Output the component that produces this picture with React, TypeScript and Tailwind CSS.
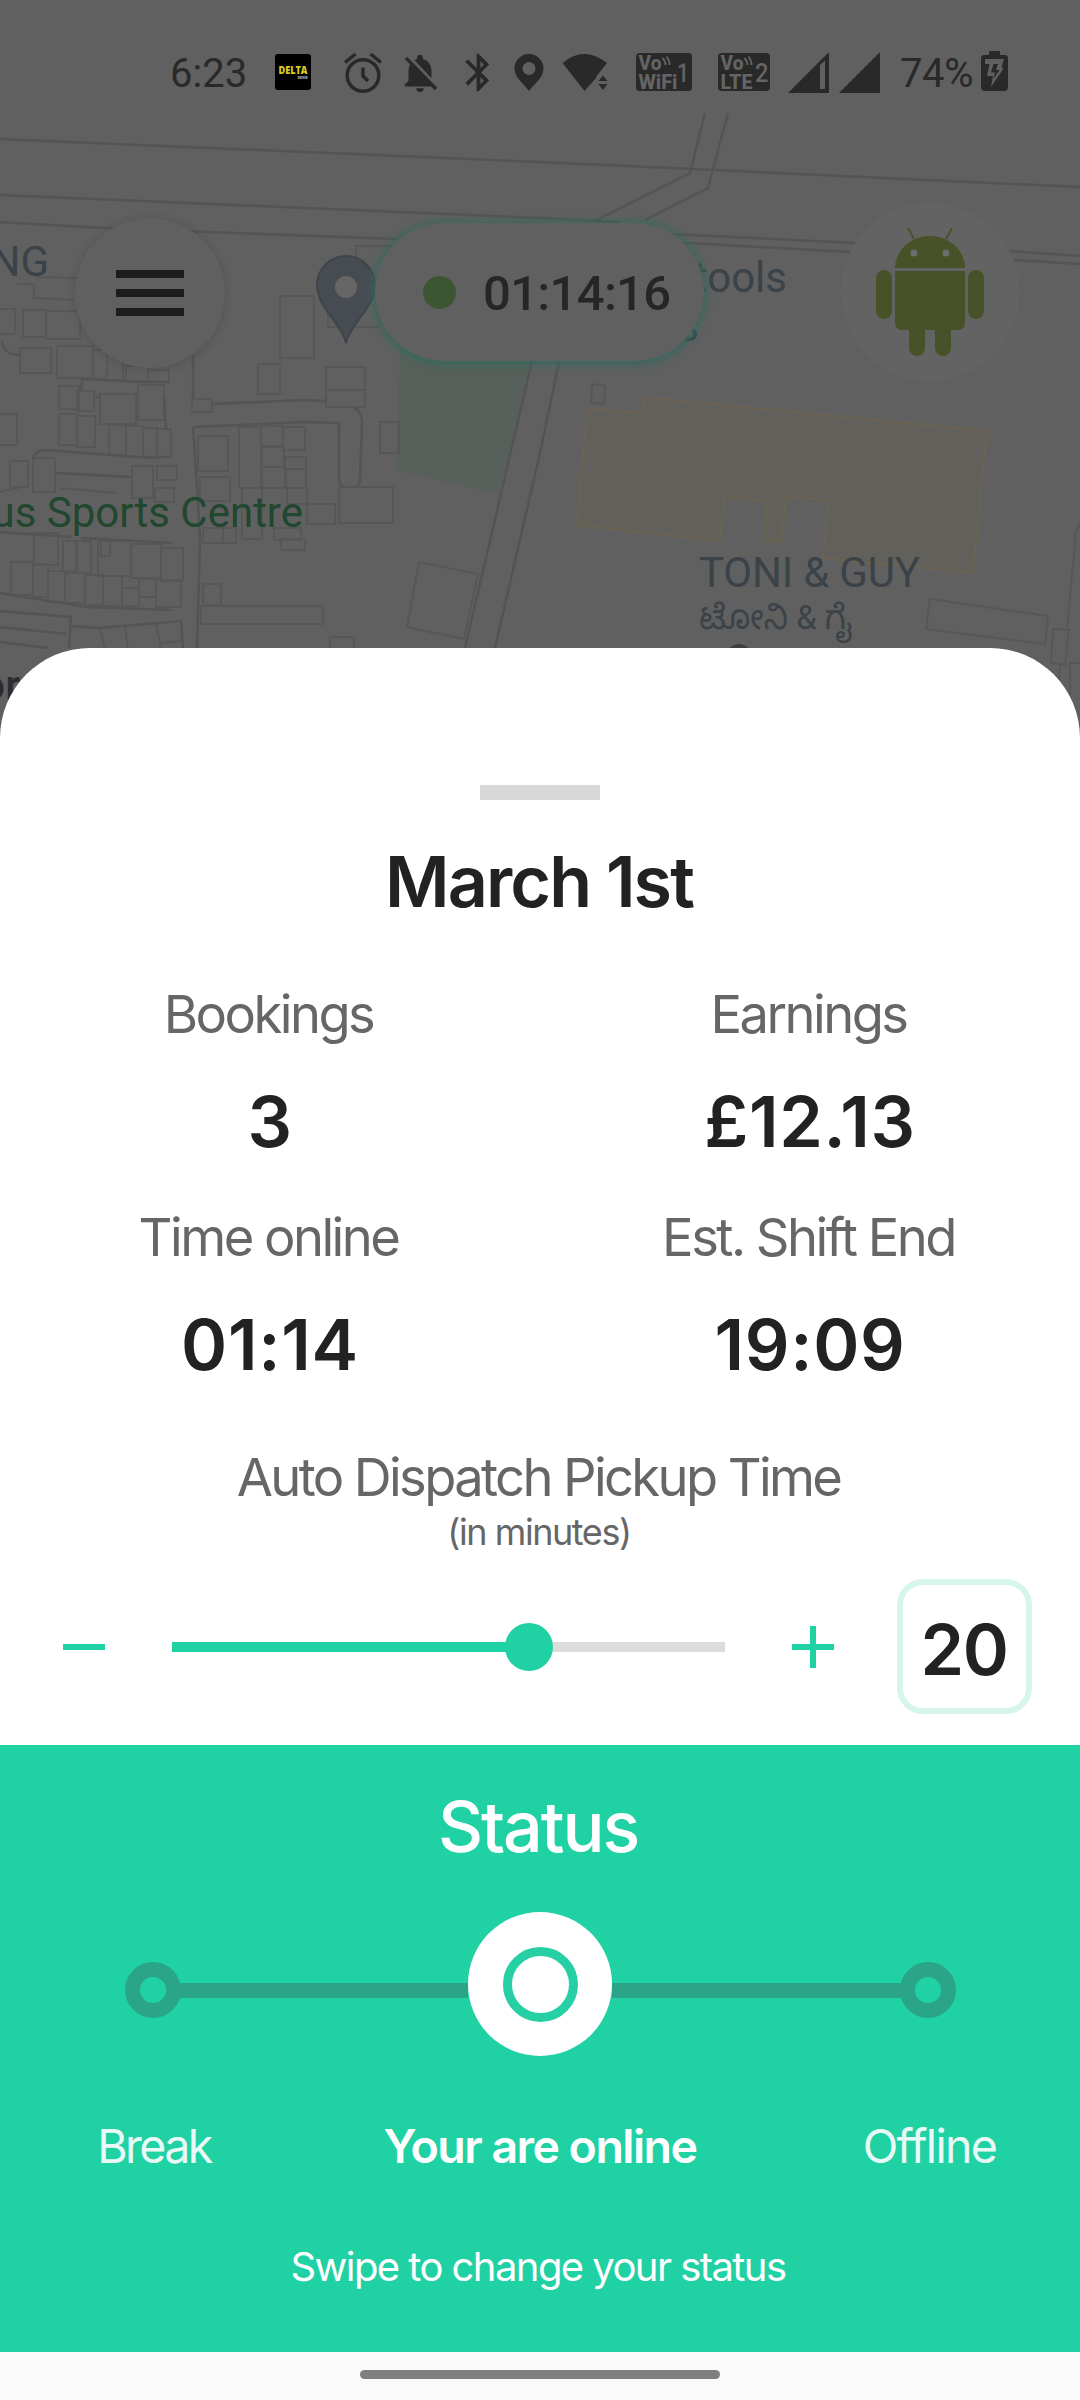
import React, { useState } from 'react';
import { MdBluetooth, MdNotificationsOff } from 'react-icons/md';
import { clsx } from 'clsx';

const MAX_MINUTES = 31;

const stats = [
  { label: 'Bookings', value: '3' },
  { label: 'Earnings', value: '£12.13' },
  { label: 'Time online', value: '01:14' },
  { label: 'Est. Shift End', value: '19:09' },
];

// x, y, width, height of the plain building outlines
const buildings = [
  [280, 296, 34, 62], [258, 364, 22, 30], [326, 367, 39, 23], [326, 390, 39, 17],
  [380, 422, 19, 31], [339, 487, 54, 36], [307, 504, 28, 20], [20, 348, 31, 25],
  [57, 346, 36, 32], [93, 350, 14, 29], [107, 355, 16, 25], [126, 366, 22, 15],
  [148, 370, 21, 12], [59, 386, 20, 23], [77, 391, 17, 20], [100, 394, 36, 30],
  [138, 385, 26, 35], [59, 414, 18, 31], [77, 416, 18, 31], [109, 425, 17, 30],
  [126, 426, 17, 31], [143, 428, 14, 30], [157, 429, 14, 28], [10, 461, 18, 26],
  [33, 458, 22, 34], [132, 466, 21, 32], [157, 466, 20, 14], [155, 488, 19, 14],
  [192, 399, 20, 13], [198, 436, 30, 35], [200, 477, 30, 24], [239, 427, 22, 61],
  [261, 426, 22, 20], [283, 427, 22, 23], [262, 447, 22, 20], [262, 467, 23, 21],
  [285, 457, 21, 12], [286, 469, 20, 19], [242, 488, 20, 51], [287, 488, 20, 16],
  [203, 528, 20, 15], [223, 528, 13, 15], [274, 528, 27, 12], [281, 539, 24, 11],
  [34, 533, 24, 32], [63, 541, 13, 30], [77, 541, 14, 32], [98, 541, 33, 35],
  [101, 541, 9, 15], [131, 544, 30, 34], [161, 548, 22, 33], [11, 562, 22, 33],
  [33, 564, 15, 33], [48, 571, 17, 31], [65, 573, 20, 30], [85, 575, 18, 30],
  [103, 576, 19, 30], [122, 588, 17, 18], [139, 579, 17, 18], [156, 580, 25, 27],
  [203, 584, 18, 21], [201, 606, 122, 18], [330, 637, 24, 20], [23, 310, 23, 27],
  [46, 311, 34, 28], [-5, 309, 20, 25], [-5, 414, 22, 31],
];

function CityMap() {
  return (
    <svg className="absolute inset-x-0 top-0" width="1080" height="740" viewBox="0 0 1080 740" fill="none">
      <path d="M400 340L536 345L499 494L396 471Z" fill="#57605a" />
      <path
        d="M587 408L643 413L644 397L987 431L973 573L823 558L828 500L786 497L782 542L765 541L767 501L724 497L720 541L577 525Z"
        fill="#62605b"
        stroke="#6a6352"
        strokeWidth="2"
      />
      <g stroke="#575757" strokeWidth="2">
        {buildings.map(([x, y, w, h]) => (
          <rect key={`${x}-${y}-${w}`} x={x} y={y} width={w} height={h} />
        ))}
        <path d="M17 284H34V298L74 300M36 277L82 278M400 246H356V262M328 310V327H380" />
        <path d="M419 562L478 574L464 639L407 627Z" />
        <path d="M592 384L605 386L604 404L591 403Z" />
        <path d="M930 599L1048 616L1045 644L926 629Z" />
        <path d="M1080 522L1076 532L1067 628M1053 629L1069 630L1065 665L1051 663ZM1060 665L1058 690M1080 663H1070V700" />
        <path d="M100 628L105 650M125 625L128 650M156 622L161 650M160 643L181 641M60 488L115 493M0 492L26 486" />
      </g>
      {/* roads */}
      <g stroke="#545454" strokeWidth="2.5">
        <path d="M0 139L540 162L1080 187" />
        <path d="M0 195L165 202L540 218L620 222M0 222L103 228L396 239M670 234L855 243M670 242L850 252M1010 251L1080 256M1014 260L1080 264" />
        <path d="M705 113L690 173L593 222M728 113L708 188L645 220" />
        <path d="M532 361L465 648M559 362L540 453L495 648" />
        <path d="M193 355V399M212 404L303 400L327 401M353 407Q362 411 362 424L360 480Q359 487 354 487M193 427L303 422L339 423V480Q340 487 344 487" />
        <path d="M193 427L198 500L200 540L197 648" />
        <path d="M2 340Q3 355 20 355M82 379L81 390M82 379L138 382H169M94 397H100M164 395L166 430M33 460Q34 450 45 450L138 457H169M55 473L131 477" />
        <path d="M0 532L71 537M81 538L172 543M0 593L86 607L172 610M0 611L71 617L69 648M0 627L67 634M0 642L48 648M71 626L100 628L181 621L183 648" />
      </g>
      <g fill="#3b4248" fontFamily="Roboto, sans-serif" fontSize="42">
        <text x="49" y="276" textAnchor="end">NG</text>
        <text x="787" y="292" textAnchor="end">tools</text>
        <text x="699" y="341" textAnchor="end">s</text>
        <text x="699" y="587" textLength="221">TONI &amp; GUY</text>
        <text x="699" y="629" fontSize="34" fontFamily="Roboto, 'Noto Sans', 'Noto Sans Kannada', sans-serif" textLength="153" lengthAdjust="spacingAndGlyphs">ಟೋನಿ &amp; ಗೈ</text>
        <text x="303" y="527" textAnchor="end" fill="#21472f">us Sports Centre</text>
        <text x="20" y="700" textAnchor="end" fill="#2d2d2f" fontWeight="500">or</text>
      </g>
      <circle cx="739" cy="657" r="13" fill="#3f3f3f" />
      <path d="M346 343C343 325 317 308 317 285A29 29 0 0 1 375 285C375 308 349 325 346 343Z" fill="#474c52" stroke="#3f454b" strokeWidth="2" />
      <circle cx="346" cy="287" r="11" fill="#666666" />
    </svg>
  );
}

type VoBadgeProps = { network: string; networkWidth: number; slot: string; slotX: number; slotWidth: number; width: number };

function VoBadge({ network, networkWidth, slot, slotX, slotWidth, width }: VoBadgeProps) {
  return (
    <svg width={width} height="38" viewBox={`0 0 ${width} 38`} fontFamily="Roboto, sans-serif" fontWeight="800" fill="#646464">
      <rect width={width} height="38" rx="4" fill="#292929" />
      <text x="2.500" y="16.500" fontSize="19.500" textLength="23" lengthAdjust="spacingAndGlyphs">Vo</text>
      <text x="2.500" y="36" fontSize="20" textLength={networkWidth} lengthAdjust="spacingAndGlyphs">{network}</text>
      <text x={slotX} y="28.500" fontSize="26" fontWeight="500" textLength={slotWidth} lengthAdjust="spacingAndGlyphs">{slot}</text>
      <path d="M26.500 5Q29.500 8 29.500 12M30.500 3.500Q33.500 7 33.500 12" fill="none" stroke="#646464" strokeWidth="1.800" />
    </svg>
  );
}

function StatusBar() {
  return (
    <div className="relative flex h-[113px] items-start bg-[#606060] pl-[170px] pt-[50px] font-['Roboto',sans-serif] text-[40px] leading-[48px] text-[#292929]">
      <span className="w-[77px]">6:23</span>
      <svg className="ml-[28px] mt-[4px]" width="36" height="36" viewBox="0 0 36 36">
        <rect width="36" height="36" rx="3" fill="#000" />
        <text x="3.500" y="20" fontFamily="'Open Sans', sans-serif" fontWeight="800" fontSize="10" fill="#d8cb1c" textLength="29" lengthAdjust="spacingAndGlyphs">DELTA</text>
        <text x="22.500" y="24.500" fontFamily="'Open Sans', sans-serif" fontWeight="800" fontSize="3" fill="#bbb" textLength="10" lengthAdjust="spacingAndGlyphs">DRIVER</text>
      </svg>
      <svg className="ml-[32px] mt-[2px]" width="40" height="42" viewBox="0 0 40 42" fill="none" stroke="#292929" strokeWidth="3.500">
        <circle cx="20" cy="23.500" r="15.800" />
        <path d="M20 15.500V24L25 29M2 10.500L12.500 2M38 10.500L27.500 2" />
      </svg>
      <MdNotificationsOff className="ml-[14px]" size={46} />
      <MdBluetooth className="ml-[13px]" size={45} />
      <svg className="ml-[13px] mt-[4px]" width="30" height="37" viewBox="0 0 30 37">
        <path d="M15 37C11 31 .5 24 .5 14.500A14.500 14.500 0 0 1 29.500 14.500C29.500 24 19 31 15 37ZM15 8A6.500 6.500 0 1 0 15 21A6.500 6.500 0 1 0 15 8Z" fill="#292929" fillRule="evenodd" />
      </svg>
      <svg className="ml-[18px] mt-[4px]" width="46" height="37" viewBox="0 0 46 37" fill="#292929">
        <path d="M.5 9Q22 -9 45 9L34 23V24L22.500 37Z" />
        <path d="M36.500 27L41 21.500L45.500 27ZM36.500 30L41 36L45.500 30Z" />
      </svg>
      <div className="ml-[28px] mt-[3px]">
        <VoBadge network="WiFi" networkWidth={39} slot="1" slotX={41} slotWidth={12} width={56} />
      </div>
      <div className="ml-[26px] mt-[3px]">
        <VoBadge network="LTE" networkWidth={32} slot="2" slotX={37} slotWidth={13.5} width={52} />
      </div>
      <svg className="ml-[18px] mt-[2px]" width="41" height="41" viewBox="0 0 41 41">
        <path d="M0 41L41 0V41Z" fill="#292929" />
        <path d="M32 13L37 8.500V37H32Z" fill="#606060" />
      </svg>
      <svg className="ml-[10px] mt-[2px]" width="41" height="41" viewBox="0 0 41 41">
        <path d="M0 41L41 0V41Z" fill="#292929" />
      </svg>
      <span className="ml-[20px] w-[74px] tracking-[-0.01em]">74%</span>
      <svg className="ml-[7px] mt-[1px]" width="27" height="40" viewBox="0 0 27 40">
        <path d="M8 0H19V4H24Q27 4 27 8V36Q27 40 23 40H4Q0 40 0 36V8Q0 4 3 4H8Z" fill="#292929" />
        <path d="M4 8H23L20.500 16L22.500 17.500L10 36L12 25H6L8.500 13H4Z" fill="#606060" />
        <path d="M12.500 13L10 21.500H14L12.500 28L18.500 19H15L17 13Z" fill="#292929" />
      </svg>
    </div>
  );
}

function AndroidAvatar() {
  return (
    <div className="flex h-[178px] w-[178px] items-center justify-center rounded-full bg-[#636363]">
      <svg width="108" height="128" viewBox="0 0 108 128" fill="#475228">
        <path d="M19 40A35 32 0 0 1 89 40Z" />
        <path d="M32 0L38 11M76 0L70 11" stroke="#475228" strokeWidth="2" />
        <path d="M19 43H89V95Q89 102 82 102H26Q19 102 19 95Z" />
        <rect x="0" y="42" width="16" height="49" rx="8" />
        <rect x="92" y="42" width="16" height="49" rx="8" />
        <path d="M33 100H49V120A8 8 0 0 1 33 120ZM59 100H75V120A8 8 0 0 1 59 120Z" />
        <circle cx="38" cy="25" r="3.500" fill="#6c6c6c" />
        <circle cx="70" cy="25" r="3.500" fill="#6c6c6c" />
      </svg>
    </div>
  );
}

export default function App() {
  const [minutes, setMinutes] = useState(20);
  const percent = (minutes / MAX_MINUTES) * 100;

  return (
    <div className="relative flex h-[2400px] w-[1080px] flex-col overflow-hidden bg-[#606060] font-['Inter',sans-serif]">
      <CityMap />
      <StatusBar />

      {/* Floating map controls */}
      <div className="relative flex h-[535px] items-start pl-[75px] pt-[90px]">
        <button className="mt-[15px] flex h-[150px] w-[150px] flex-col items-center justify-center gap-[11px] rounded-full bg-[#606060] shadow-[0_1px_10px_rgba(0,0,0,0.15)]">
          <span className="h-[8px] w-[68px] bg-[#1c1c1c]" />
          <span className="h-[8px] w-[68px] bg-[#1c1c1c]" />
          <span className="h-[8px] w-[68px] bg-[#1c1c1c]" />
        </button>
        <div className="ml-[150px] mt-[20px] flex h-[138px] w-[329px] items-center rounded-full bg-[#606060] pl-[48px] shadow-[0_1px_10px_2px_#326a5d]">
          <span className="h-[33px] w-[33px] rounded-full bg-[#3b5632]" />
          <span className="ml-[27px] pt-[4px] font-['Roboto',sans-serif] text-[49px] font-medium leading-[56px] tracking-[-0.014em] text-[#262626]">01:14:16</span>
        </div>
        <div className="ml-[137px]">
          <AndroidAvatar />
        </div>
      </div>

      {/* Shift summary */}
      <div className="relative flex h-[1097px] flex-col items-center rounded-t-[90px] bg-white pt-[137px]">
        <div className="h-[15px] w-[120px] bg-[#d8d8d8]" />
        <h1 className="mt-[37px] pr-[2px] text-[70px] font-semibold leading-[90px] tracking-[-0.027em] text-[#222222]">March 1st</h1>
        <div className="mt-[57px] grid w-full grid-cols-2 gap-y-[45px] text-center">
          {stats.map((stat) => (
            <div key={stat.label}>
              <p className="pr-[3px] text-[52.5px] leading-[60px] tracking-[-0.048em] text-[#666666]">{stat.label}</p>
              <p className="mt-[38px] text-[70px] font-semibold leading-[80px] tracking-[0.01em] text-[#222222]">{stat.value}</p>
            </div>
          ))}
        </div>
        <p className="mt-[62px] pr-[3px] text-[52.5px] leading-[60px] tracking-[-0.05em] text-[#666666]">Auto Dispatch Pickup Time</p>
        <p className="mt-[5px] pr-[2px] text-[36px] leading-[40px] tracking-[-0.04em] text-[#666666]">(in minutes)</p>
        <div className="mt-[27px] flex w-full items-center pl-[63px]">
          <button onClick={() => setMinutes(Math.max(0, minutes - 1))} className="flex h-[42px] w-[42px] items-center">
            <span className="h-[6px] w-full bg-[#20d1a4]" />
          </button>
          <div className="relative ml-[67px] h-[10px] w-[553px] bg-[#dcdcdc]">
            <div className="h-full bg-[#20d1a4]" style={{ width: `${percent}%` }} />
            <div className="absolute -top-[19px] h-[48px] w-[48px] -translate-x-1/2 rounded-full bg-[#20d1a4]" style={{ left: `${percent}%` }} />
          </div>
          <button onClick={() => setMinutes(Math.min(MAX_MINUTES, minutes + 1))} className="ml-[67px]">
            <svg width="42" height="42" viewBox="0 0 42 42" stroke="#20d1a4" strokeWidth="6">
              <path d="M0 21H42M21 0V42" />
            </svg>
          </button>
          <div className="ml-[63px] flex h-[135px] w-[135px] items-center justify-center rounded-[26px] border-[6px] border-[#d6f5ed] pr-[1px] pt-[6px] text-[70px] font-semibold leading-[80px] tracking-[-0.02em] text-[#222222]">
            {minutes}
          </div>
        </div>
      </div>

      {/* Driver status */}
      <div className="relative flex h-[607px] flex-col items-center bg-[#20d1a4] pt-[42px] text-white">
        <h2 className="pr-[4px] text-[70px] font-medium leading-[80px] tracking-[-0.03em]">Status</h2>
        <div className="mt-[45px] flex h-[144px] w-[831px] items-center">
          <span className="mt-[12px] h-[56px] w-[56px] rounded-full border-[15px] border-[#2aa587]" />
          <span className="-ml-[2px] mt-[12px] h-[15px] flex-1 bg-[#2aa587]" />
          <span className="flex h-[144px] w-[144px] items-center justify-center rounded-full bg-white">
            <span className="h-[75px] w-[75px] rounded-full border-[9px] border-[#27cfa4]" />
          </span>
          <span className="-mr-[2px] mt-[12px] h-[15px] flex-1 bg-[#2aa587]" />
          <span className="mt-[12px] h-[56px] w-[56px] rounded-full border-[15px] border-[#2aa587]" />
        </div>
        <div className="mt-[60px] flex w-full text-center text-[46.5px] leading-[60px]">
          {['Break', 'Your are online', 'Offline'].map((status, idx) => (
            <span
              key={status}
              className={clsx(
                idx === 0 && 'w-[312px] pr-[4px] tracking-[-0.055em] opacity-90',
                idx === 1 && 'w-[456px] tracking-[-0.033em] font-semibold',
                idx === 2 && 'w-[312px] pl-[11px] tracking-[-0.036em] opacity-90'
              )}
            >
              {status}
            </span>
          ))}
        </div>
        <p className="mt-[66px] pr-[4px] text-[40px] leading-[50px] tracking-[-0.039em]">Swipe to change your status</p>
      </div>

      {/* Gesture bar */}
      <div className="relative flex h-[48px] items-start justify-center bg-[#fafafa] pt-[18px]">
        <span className="h-[9px] w-[360px] rounded-full bg-[#7f7f7f]" />
      </div>
    </div>
  );
}
